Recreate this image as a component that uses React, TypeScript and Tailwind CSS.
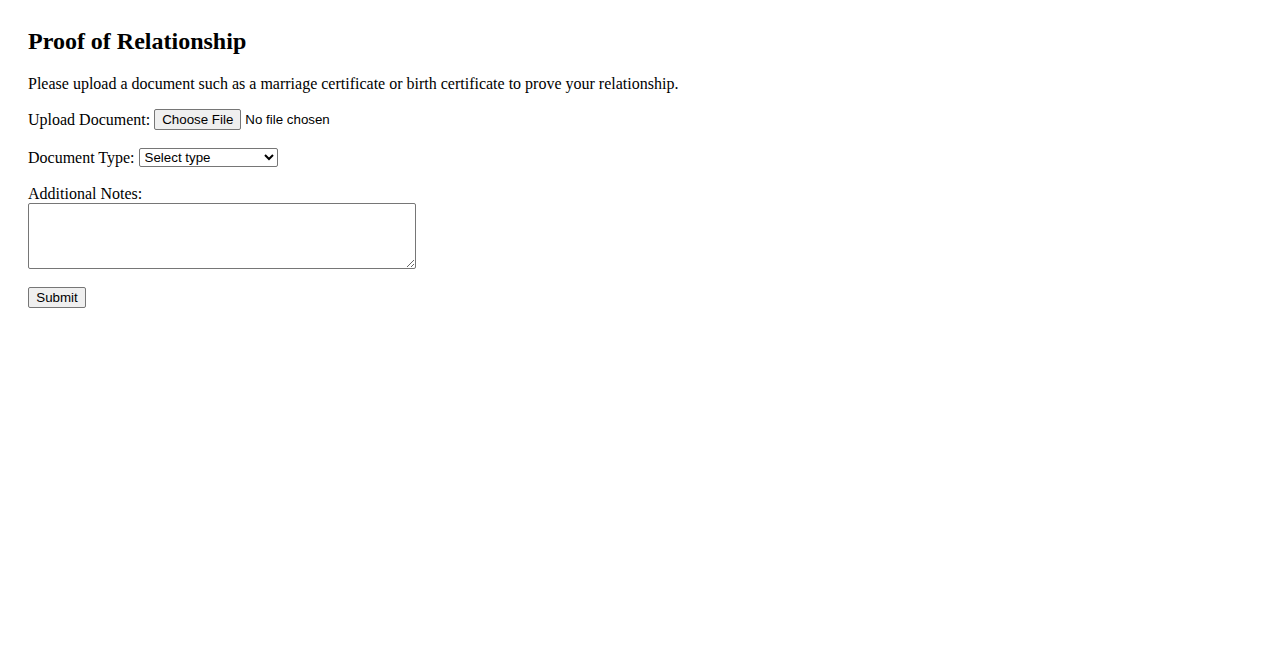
import React from 'react';

const controlFont = "font-['Liberation_Sans',Arial,sans-serif] text-[13.333px]";

const App: React.FC = () => {
  return (
    <div className="min-h-screen bg-white px-[28px] pt-[28px] font-['Liberation_Serif','Times_New_Roman',serif] text-[16px] text-black">
      <h2 className="text-[24px] leading-[27px] font-bold">Proof of Relationship</h2>
      <p className="mt-[20px] leading-[18px]">
        Please upload a document such as a marriage certificate or birth certificate to prove your relationship.
      </p>

      <form className="mt-[16px]" onSubmit={(e) => e.preventDefault()}>
        <div className="flex h-[21px] items-center">
          <label htmlFor="doc">Upload Document:</label>
          <input
            id="doc"
            type="file"
            className={`ml-[4px] ${controlFont} text-black file:mr-[4px] file:h-[21px] file:rounded-[2px] file:border file:border-solid file:border-[#767676] file:bg-[#efefef] file:px-[7px] file:text-black`}
          />
        </div>

        <div className="mt-[17px] flex h-[21px] items-center">
          <label htmlFor="type">Document Type:</label>
          <select
            id="type"
            defaultValue=""
            className={`ml-[4px] h-[19px] w-[139px] rounded-[2px] border border-solid border-[#767676] bg-white pl-[1px] ${controlFont} text-black`}
          >
            <option value="">Select type</option>
            <option value="marriage">Marriage Certificate</option>
            <option value="birth">Birth Certificate</option>
            <option value="other">Other</option>
          </select>
        </div>

        <div className="mt-[16px]">
          <label htmlFor="notes" className="block leading-[19px]">Additional Notes:</label>
          <textarea
            id="notes"
            className={`block h-[66px] w-[388px] rounded-[2px] border border-solid border-[#767676] p-[2px] ${controlFont}`}
          />
        </div>

        <button
          type="submit"
          className={`mt-[18px] h-[21px] w-[58px] rounded-[2px] border border-solid border-[#767676] bg-[#efefef] ${controlFont} text-black`}
        >
          Submit
        </button>
      </form>
    </div>
  );
};

export default App;
